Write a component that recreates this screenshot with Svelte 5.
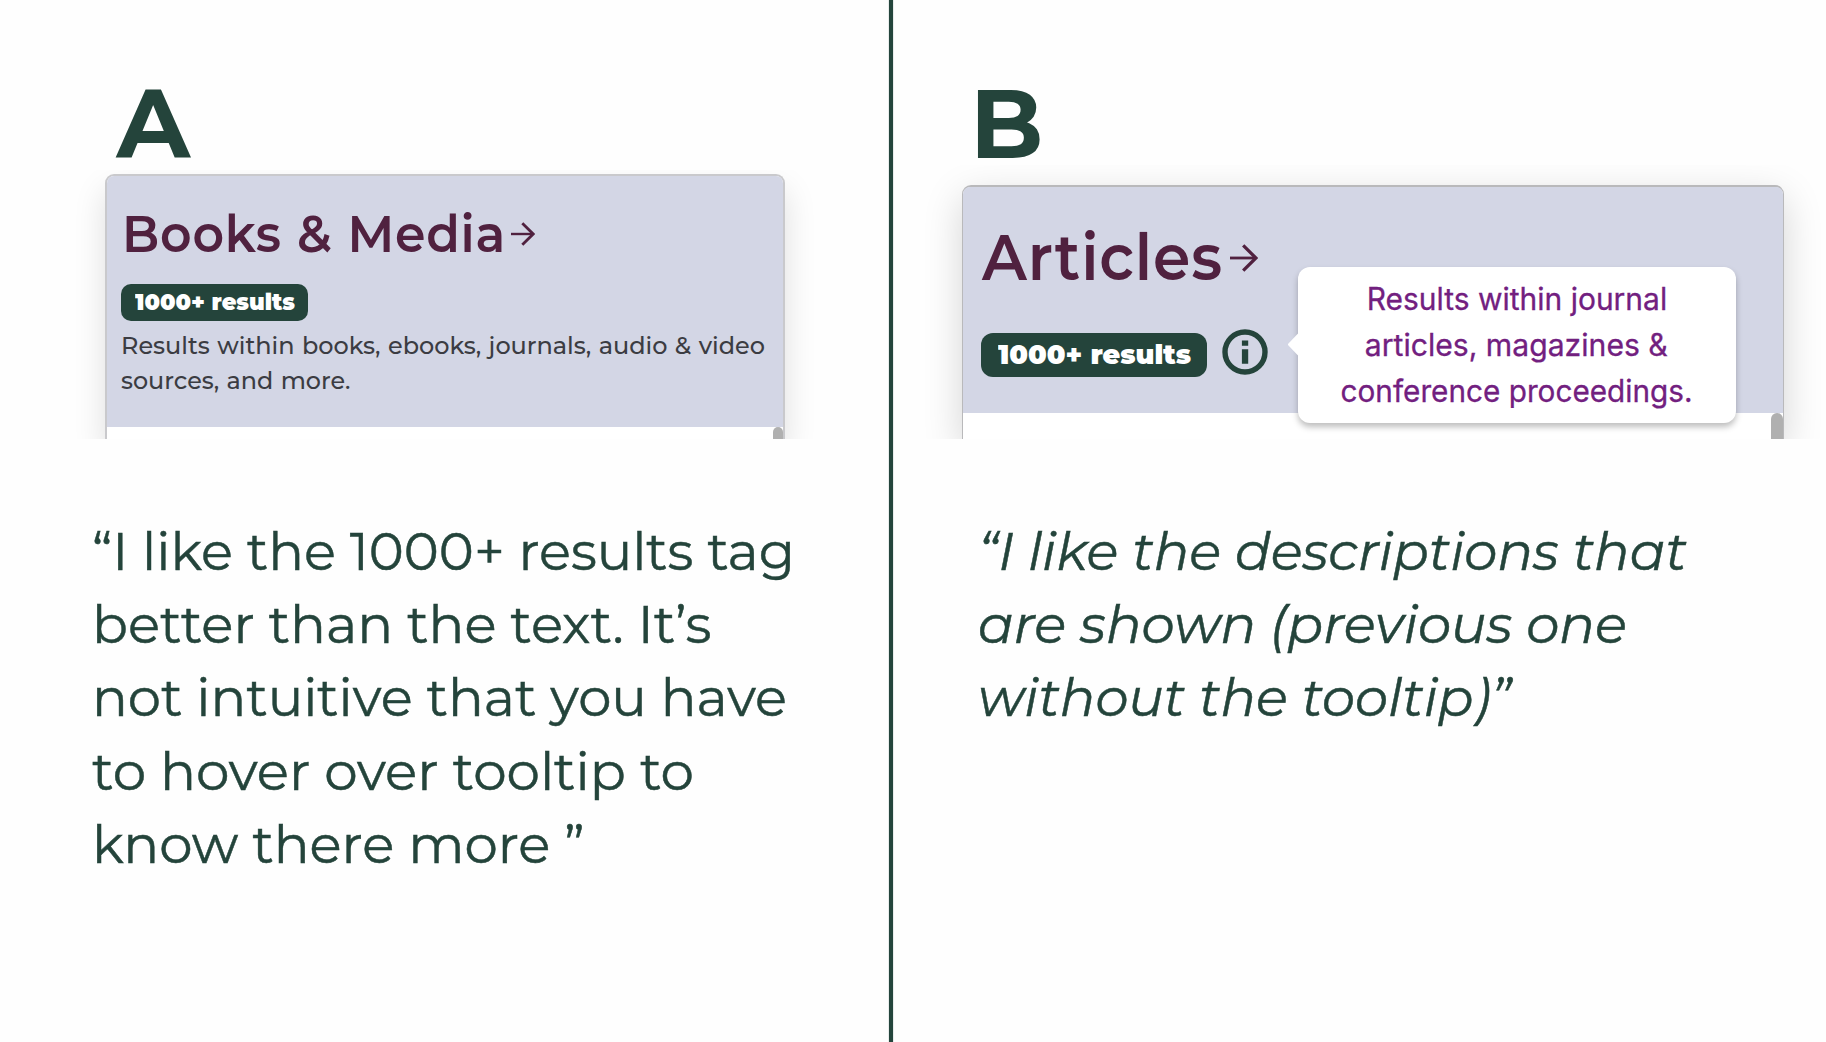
<script>
  // Stretches a line of text horizontally to the given width in pixels.
  function fit(node, width) {
    const natural = node.getBoundingClientRect().width;
    if (natural > 0) node.style.transform = `scaleX(${width / natural})`;
  }

  const quoteA = [
    ['“I like the 1000+ results tag', 703],
    ['better than the text. It’s', 619.5],
    ['not intuitive that you have', 695],
    ['to hover over tooltip to', 602],
    ['know there more ”', 492.5],
  ];
  const quoteB = [
    ['“I like the descriptions that', 709],
    ['are shown (previous one', 649],
    ['without the tooltip)”', 533],
  ];
  const tip = [
    ['Results within journal', 300.5],
    ['articles, magazines &', 303],
    ['conference proceedings.', 352],
  ];
  const description = [
    ['Results within books, ebooks, journals, audio & video', 644],
    ['sources, and more.', 229.5],
  ];
</script>

{#snippet arrow()}
  <svg class="arrow" viewBox="0 0 24 24" aria-hidden="true">
    <path d="M0 12H22" stroke-width="2.4" />
    <path d="M11.3 1.2 22.2 12 11.3 22.8" stroke-width="2.8" />
  </svg>
{/snippet}

{#snippet lines(items)}
  {#each items as [text, width]}
    <span class="line"><span use:fit={width}>{text}</span></span>
  {/each}
{/snippet}

<main class="page">
  <section class="panel a">
    <h1>A</h1>
    <article class="card">
      <header>
        <h2><span class="slot"><span class="title" use:fit={384}>Books &amp; Media</span></span>{@render arrow()}</h2>
        <div class="row">
          <div class="badge"><span use:fit={160}>1000+ results</span></div>
        </div>
        <p class="description">{@render lines(description)}</p>
      </header>
      <div class="scrollbar"></div>
    </article>
    <blockquote>{@render lines(quoteA)}</blockquote>
  </section>

  <div class="divider"></div>

  <section class="panel b">
    <h1>B</h1>
    <article class="card">
      <header>
        <h2><span class="slot"><span class="title" use:fit={241}>Articles</span></span>{@render arrow()}</h2>
        <div class="row">
          <div class="badge"><span use:fit={193}>1000+ results</span></div>
          <svg class="info" viewBox="0 0 46 46" aria-hidden="true">
            <circle cx="23" cy="23" r="20" />
            <path d="M19.9 11.4h6.3v5.4h-6.3zM19.9 20.3h6.3v14.4h-6.3z" />
          </svg>
        </div>
      </header>
      <div class="scrollbar"></div>
      <div class="tooltip">{@render lines(tip)}</div>
    </article>
    <blockquote>{@render lines(quoteB)}</blockquote>
  </section>
</main>

<style>
  :global(body) {
    margin: 0;
    background: #fefefe;
  }

  .page,
  .page * {
    box-sizing: border-box;
  }

  .page {
    display: flex;
    width: 1826px;
    height: 1042px;
    overflow: hidden;
    background: #fefefe;
    color: #24443b;
    font-family: Montserrat, Inter, 'Liberation Sans', sans-serif;
  }

  h1,
  h2,
  p,
  blockquote {
    margin: 0;
    white-space: nowrap;
  }

  .panel {
    display: flex;
    flex-direction: column;
    padding-top: 89px;
  }

  .panel.a {
    width: 889px;
    padding-left: 105px;
  }

  .panel.b {
    flex: 1;
    padding-left: 69px;
  }

  .divider {
    width: 4px;
    background: #24453c;
    box-shadow: 0 0 1px #24453c;
  }

  h1 {
    height: 68px;
    font-size: 96px;
    line-height: 70px;
    font-weight: 700;
  }

  .title,
  .badge span,
  .line > span {
    display: inline-block;
    transform-origin: left center;
  }

  .a h1 {
    padding-left: 11.5px;
  }

  .b h1 {
    padding-left: 8px;
  }

  .card {
    position: relative;
    border: solid #c9c9cc;
    border-width: 2px 2px 0;
    border-radius: 9px 9px 0 0;
    background: #fff;
  }

  .a .card {
    width: 680px;
    height: 265px;
    margin-top: 17px;
    box-shadow: 0 16px 32px rgba(0, 0, 0, 0.13);
    clip-path: inset(-4px -40px 0 -40px);
  }

  .b .card {
    width: 822px;
    height: 254px;
    margin-top: 28px;
    border-color: #b9b9bb;
    border-width: 2px 1.5px 0;
    box-shadow: 0 12px 38px rgba(0, 0, 0, 0.17);
    clip-path: inset(-20px -43px 0 -43px);
  }

  header {
    border-radius: 7px 7px 0 0;
    background: #d3d6e5;
  }

  .a header {
    height: 251px;
    padding: 37px 0 0 14px;
  }

  .b header {
    height: 226px;
    padding: 45px 0 0 18px;
  }

  h2 {
    display: flex;
    align-items: center;
    color: #50213f;
    font-weight: 600;
    letter-spacing: 0.015em;
  }

  .a h2 {
    height: 42px;
    padding-left: 1px;
    font-size: 52px;
    line-height: 42px;
    word-spacing: 1px;
  }

  .b h2 {
    height: 50px;
    padding-left: 1px;
    font-size: 64px;
    line-height: 50px;
  }

  .a .slot {
    width: 389px;
  }

  .b .slot {
    width: 248px;
  }

  .arrow {
    width: 24px;
    height: 24px;
    fill: none;
    stroke: #50213f;
  }

  .b .arrow {
    width: 28px;
    height: 28px;
    margin-top: 2px;
  }

  .row {
    display: flex;
    align-items: center;
    gap: 15px;
  }

  .a .row {
    margin-top: 29px;
  }

  .b .row {
    margin-top: 45px;
  }

  .badge {
    background: #24443b;
    color: #fff;
    font-weight: 900;
    white-space: nowrap;
  }

  .a .badge {
    width: 187px;
    height: 37px;
    padding-left: 14px;
    border-radius: 10px;
    font-size: 23.5px;
    line-height: 36px;
  }

  .b .badge {
    width: 226px;
    height: 44px;
    margin-top: 6px;
    padding-left: 17px;
    border-radius: 12px;
    font-size: 27.5px;
    line-height: 43px;
  }

  .info {
    width: 46px;
    height: 46px;
    fill: #24443b;
  }

  .info circle {
    fill: none;
    stroke: #24443b;
    stroke-width: 5.4;
  }

  .line {
    display: block;
  }

  .description {
    margin-top: 8px;
    color: #3b3c42;
    font-size: 24.2px;
    line-height: 34.6px;
    font-weight: 500;
    word-spacing: 1px;
  }

  .scrollbar {
    width: 10px;
    height: 12px;
    margin-left: auto;
    border-radius: 6px 6px 0 0;
    background: #b0b0b0;
  }

  .b .scrollbar {
    width: 12px;
    height: 26px;
  }

  .tooltip {
    position: absolute;
    top: 80px;
    left: 334.5px;
    width: 438px;
    height: 156px;
    padding-top: 9px;
    border-radius: 12px;
    background: #fff;
    box-shadow: 0 4px 6px rgba(0, 0, 0, 0.26);
    color: #72207f;
    font-family: Inter, sans-serif;
    font-size: 30.5px;
    line-height: 46px;
    text-align: center;
    white-space: nowrap;
    -webkit-text-stroke: 0.3px #72207f;
  }

  .tooltip .line > span {
    transform-origin: center;
  }

  .tooltip::before {
    position: absolute;
    top: 66px;
    left: -10px;
    width: 11px;
    height: 23px;
    background: #fff;
    clip-path: polygon(100% 0, 0 50%, 100% 100%);
    content: '';
  }

  blockquote {
    font-size: 53.33px;
    line-height: 73.2px;
    font-weight: 400;
    -webkit-text-stroke: 0.5px #24443b;
  }

  .a blockquote {
    margin: 75px 0 0 -13px;
  }

  .b blockquote {
    margin: 75px 0 0 15.5px;
    font-style: italic;
  }
</style>
